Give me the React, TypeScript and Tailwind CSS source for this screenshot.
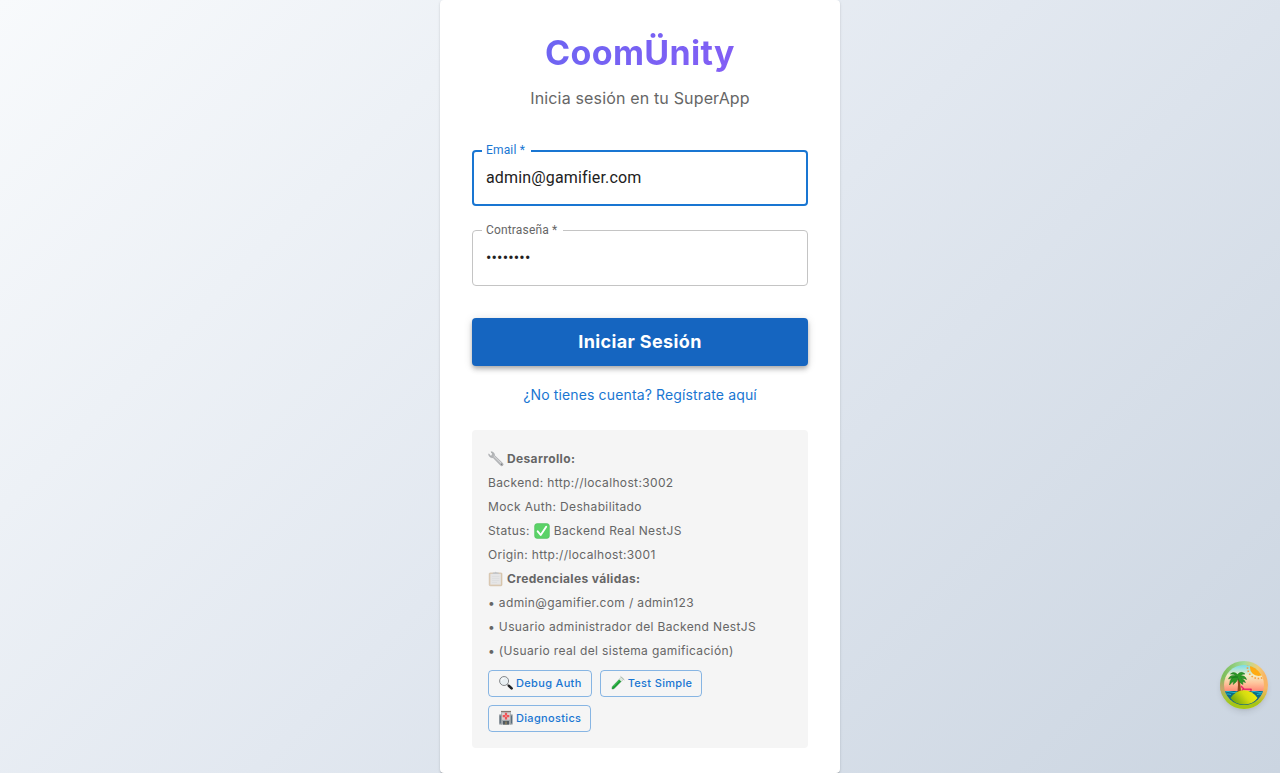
import React from "react";

const Wrench = () => (
  <svg viewBox="0 0 16 16" className="size-4 shrink-0" aria-hidden="true">
    <path d="M.8 2.8 2 4.9 4.1 4.7 4.4 2.7 3 .8C5 .7 6.7 2.2 6.5 4.4L14.8 12.4C15.9 13.7 14.3 15.6 12.8 14.6L5 6.6C2.8 7.2.4 5.2.8 2.8Z" fill="#b4b6b8" stroke="#96999c" strokeWidth=".5" />
    <path d="M5.8 5.2 13.4 12.6" stroke="#dcdddf" strokeWidth="1" />
    <circle cx="13.5" cy="13.3" r=".7" fill="#77797c" />
  </svg>
);

const Check = () => (
  <svg viewBox="0 0 16 16" className="size-4 shrink-0" aria-hidden="true">
    <rect x=".6" y=".6" width="14.8" height="14.8" rx="2.6" fill="#5bd267" stroke="#48b955" strokeWidth=".5" />
    <path d="M3.7 8.3 6.7 12 12.2 3.8" fill="none" stroke="#fff" strokeWidth="1.9" strokeLinecap="round" strokeLinejoin="round" />
  </svg>
);

const Clipboard = () => (
  <svg viewBox="0 0 16 16" className="size-4 shrink-0" aria-hidden="true">
    <rect x="1.2" y="1.9" width="12.8" height="12.9" rx="1" fill="#dccbb4" stroke="#c8b193" strokeWidth=".5" />
    <path d="M2.4 2.8H12.8V13.6H2.4Z" fill="#e5e5e6" />
    <path d="M4 5.5H11.2M4 7.5H11.2M4 9.5H11.2M4 11.5H9" stroke="#d9dadc" strokeWidth=".6" />
    <path d="M4.8 1.4H6.6Q7.7 0 8.8 1.4H10.6V2.9H4.8Z" fill="#c3c5c8" />
  </svg>
);

const Magnifier = () => (
  <svg viewBox="0 0 16 16" className="size-4 shrink-0" aria-hidden="true">
    <path d="m9.4 9.4 1.8 1.7" stroke="#66686b" strokeWidth="1.4" />
    <path d="m11 10.9 2.6 2.5" stroke="#1f2022" strokeWidth="2.6" strokeLinecap="round" />
    <circle cx="6.1" cy="6" r="4.5" fill="#e9eff2" stroke="#85878a" strokeWidth="1" />
    <path d="M3.5 5.7Q3.9 3.5 6.1 3.3" fill="none" stroke="#fff" strokeWidth="1" />
  </svg>
);

const TestTube = () => (
  <svg viewBox="0 0 16 16" className="size-4 shrink-0" aria-hidden="true">
    <path d="M11.3 2 13.6 4.3 4.6 13.5Q2.5 14.8 1.8 14.1 1.1 13.2 2.4 11.2Z" fill="#dce9de" stroke="#a6b5a8" strokeWidth=".5" />
    <path d="M9.2 4.4 11.2 6.5 4.5 13.2Q2.6 14.5 2.1 13.9 1.6 13.1 2.7 11.3Z" fill="#1b9e35" />
    <path d="M9.2 5.4 3.6 11.4" stroke="#45c657" strokeWidth=".8" />
    <path d="m10.8 1.6 3.3 3.1" stroke="#a8b3aa" strokeWidth=".9" strokeLinecap="round" />
  </svg>
);

const Hospital = () => (
  <svg viewBox="0 0 16 16" className="size-4 shrink-0" aria-hidden="true">
    <path d="M1.2 4.5H4V14.6H1.2ZM12 4.5H14.6V14.6H12Z" fill="#858d93" />
    <path d="M3.2 1.2H12.8V14.6H3.2Z" fill="#a3a9ad" />
    <path d="M3 .9H13V2H3Z" fill="#85786f" />
    <path d="M1.8 6H2.7V13H1.8ZM13.1 6H14V13H13.1Z" fill="#566a7b" />
    <path d="M4 2.6H12V9.8H4Z" fill="#d9cfcd" />
    <path d="M6.9 2.8H9.1V5H11.3V7.2H9.1V9.4H6.9V7.2H4.7V5H6.9Z" fill="#ef5356" />
    <path d="M7.4 5.5H8.6V6.7H7.4Z" fill="#f7c3c3" />
    <path d="M5 11H11V14.6H5Z" fill="#505a62" />
    <path d="M7.6 11.4H8.4V14.6H7.6Z" fill="#c8a35c" />
  </svg>
);

const Island = () => (
  <svg viewBox="0 0 48 48" className="size-12" aria-hidden="true">
    <defs>
      <linearGradient id="ring" x1="4" y1="14" x2="44" y2="20" gradientUnits="userSpaceOnUse">
        <stop offset="0" stopColor="#7fbf5c" />
        <stop offset=".45" stopColor="#a3dda0" />
        <stop offset=".8" stopColor="#f2cd74" />
        <stop offset="1" stopColor="#f8b465" />
      </linearGradient>
      <radialGradient id="blush" cx="1" cy="28" r="12" gradientUnits="userSpaceOnUse">
        <stop offset="0" stopColor="#d2a06e" />
        <stop offset="1" stopColor="#d2a06e" stopOpacity="0" />
      </radialGradient>
      <linearGradient id="rim" x1="0" y1="27" x2="0" y2="42" gradientUnits="userSpaceOnUse">
        <stop offset="0" stopColor="#b5c52c" stopOpacity="0" />
        <stop offset="1" stopColor="#a6c615" />
      </linearGradient>
      <linearGradient id="sky" x1="0" y1="4" x2="0" y2="30" gradientUnits="userSpaceOnUse">
        <stop offset="0" stopColor="#78dcea" />
        <stop offset=".4" stopColor="#f2edc4" />
        <stop offset=".7" stopColor="#ffc49b" />
        <stop offset="1" stopColor="#ff8c76" />
      </linearGradient>
      <linearGradient id="sand" x1="33" y1="29" x2="14" y2="44" gradientUnits="userSpaceOnUse">
        <stop offset="0" stopColor="#f0ec0c" />
        <stop offset=".4" stopColor="#d5dc10" />
        <stop offset="1" stopColor="#66a00c" />
      </linearGradient>
      <clipPath id="scene"><circle cx="24" cy="24" r="20" /></clipPath>
    </defs>
    <circle cx="24" cy="24" r="24" fill="url(#ring)" />
    <circle cx="24" cy="24" r="24" fill="url(#blush)" />
    <circle cx="24" cy="24" r="24" fill="url(#rim)" />
    <g clipPath="url(#scene)">
      <path d="M4 4H44V44H4Z" fill="url(#sky)" />
      <circle cx="38.5" cy="6.5" r="8.5" fill="#ffab13" />
      <circle cx="38.5" cy="6.5" r="11" fill="none" stroke="#f89a3c" strokeWidth="1.6" strokeDasharray="1.5 1.8" />
      <path d="M4 30H44V44H4Z" fill="#0b6c86" />
      <path d="M5 31Q8 29.8 11 31T17 31M31 31Q34 29.8 37 31T43 31M5 33.5Q8 32.3 11 33.5M37 33.5Q40 32.3 43 33.5" fill="none" stroke="#22b6cf" strokeWidth="1" />
      <path d="M17.5 18Q18.5 24 17.5 31H21Q20.5 22 19 17Z" fill="#924a20" />
      <path d="M18 16Q10 14 9.5 24Q12 21 14 20L13 23.5Q17 21 18 17.5Q19 22 23 23.5L22.5 20.5L25.5 21.5Q24.5 18.5 21.5 17.5Q24 17 26.5 18.5Q25 14 20.5 15Q22.5 12.5 25 13Q21 9.5 17.5 13.5Q14 10 10.5 13Q14 12.5 15.5 14.8Q10 13.5 8.5 18Q13 16 18 16Z" fill="#2c9a24" stroke="#167321" strokeWidth=".5" />
      <path d="m21.5 24.5 3 3H31.5V29H23.5L20.5 25.5Z" fill="#f0286a" />
      <path d="m23.5 27.5-2 3M31 28v2.5" stroke="#c02455" />
      <path d="M10.5 37Q16 29.2 24 29.2T37.5 37Q33 43.5 24 43.5T10.5 37Z" fill="url(#sand)" />
      <path d="M12 39.5Q17 43.8 24 43.8T36 39.5L40 44H8Z" fill="#2f7d46" opacity=".5" />
    </g>
  </svg>
);

function Field({ id, label, type, value, active }: { id: string; label: string; type: string; value: string; active?: boolean }) {
  return (
    <div className="relative font-['Roboto',sans-serif] tracking-[0.01em]">
      <label
        htmlFor={id}
        className={`absolute -top-2 left-2.5 bg-white pr-1.5 pl-1 text-xs leading-4 ${active ? "text-[#1976d2]" : "text-[#666666]"}`}
      >
        {label} *
      </label>
      <input
        id={id}
        type={type}
        defaultValue={value}
        required
        className={`block h-14 w-full rounded bg-white pb-0.5 text-base text-[#212121] outline-none ${active ? "border-2 border-[#1976d2] px-3" : "border border-[#c4c4c4] px-[13px]"}`}
      />
    </div>
  );
}

function ToolButton({ icon, children }: { icon: React.ReactNode; children: React.ReactNode }) {
  return (
    <button type="button" className="flex h-[27px] items-center gap-0.5 rounded border border-[#1976d2]/50 px-[9px] pb-0.5 text-[11px] font-medium tracking-[0.03em] text-[#1976d2]">
      {icon}
      {children}
    </button>
  );
}

export default function App() {
  return (
    <div className="flex min-h-screen justify-center bg-linear-135 from-[#f8fafc] via-[#e2e8f0] to-[#cbd5e1] font-['Inter',sans-serif]">
      <main className="w-full max-w-[400px] rounded bg-white px-8 pt-8 pb-6 shadow-[0_2px_1px_-1px_rgba(0,0,0,0.2),0_1px_1px_rgba(0,0,0,0.14),0_1px_3px_rgba(0,0,0,0.12)]">
        <h1 className="bg-linear-135 from-[#6366f1] to-[#8b5cf6] bg-clip-text text-center text-[34px] leading-[42px] font-bold tracking-[0.01em] text-transparent">
          CoomÜnity
        </h1>
        <p className="mt-3 text-center text-base tracking-[0.01em] text-[#666666]">Inicia sesión en tu SuperApp</p>

        <form className="mt-10" onSubmit={(e) => e.preventDefault()}>
          <div className="flex flex-col gap-6">
            <Field id="email" label="Email" type="email" value="admin@gamifier.com" active />
            <Field id="password" label="Contraseña" type="password" value="admin123" />
          </div>
          <button
            type="submit"
            className="mt-8 h-12 w-full rounded bg-[#1565c0] text-lg font-bold tracking-[0.02em] text-white shadow-[0_2px_4px_-1px_rgba(0,0,0,0.2),0_4px_5px_rgba(0,0,0,0.14),0_1px_10px_rgba(0,0,0,0.12)]"
          >
            Iniciar Sesión
          </button>
        </form>

        <p className="mt-[19px] text-center text-sm tracking-[0.01em]">
          <a href="#registro" className="text-[#1976d2]">¿No tienes cuenta? Regístrate aquí</a>
        </p>

        <section className="mt-[25px] rounded bg-[#f5f5f5] px-4 pt-[17px] pb-4 text-xs leading-6 tracking-[0.03em] text-[#666666]">
          <h2 className="flex items-center gap-[3px] font-bold"><Wrench />Desarrollo:</h2>
          <p>Backend: http://localhost:3002</p>
          <p>Mock Auth: Deshabilitado</p>
          <p className="flex items-center gap-1">Status: <Check /> Backend Real NestJS</p>
          <p>Origin: http://localhost:3001</p>
          <h2 className="flex items-center gap-[3px] font-bold"><Clipboard />Credenciales válidas:</h2>
          <p>• admin@gamifier.com / admin123</p>
          <p>• Usuario administrador del Backend NestJS</p>
          <p>• (Usuario real del sistema gamificación)</p>
          <div className="mt-[7px] flex flex-wrap gap-2">
            <ToolButton icon={<Magnifier />}>Debug Auth</ToolButton>
            <ToolButton icon={<TestTube />}>Test Simple</ToolButton>
            <ToolButton icon={<Hospital />}>Diagnostics</ToolButton>
          </div>
        </section>
      </main>
      <button type="button" aria-label="Open developer tools" className="fixed right-3 bottom-16 rounded-full shadow-md">
        <Island />
      </button>
    </div>
  );
}
